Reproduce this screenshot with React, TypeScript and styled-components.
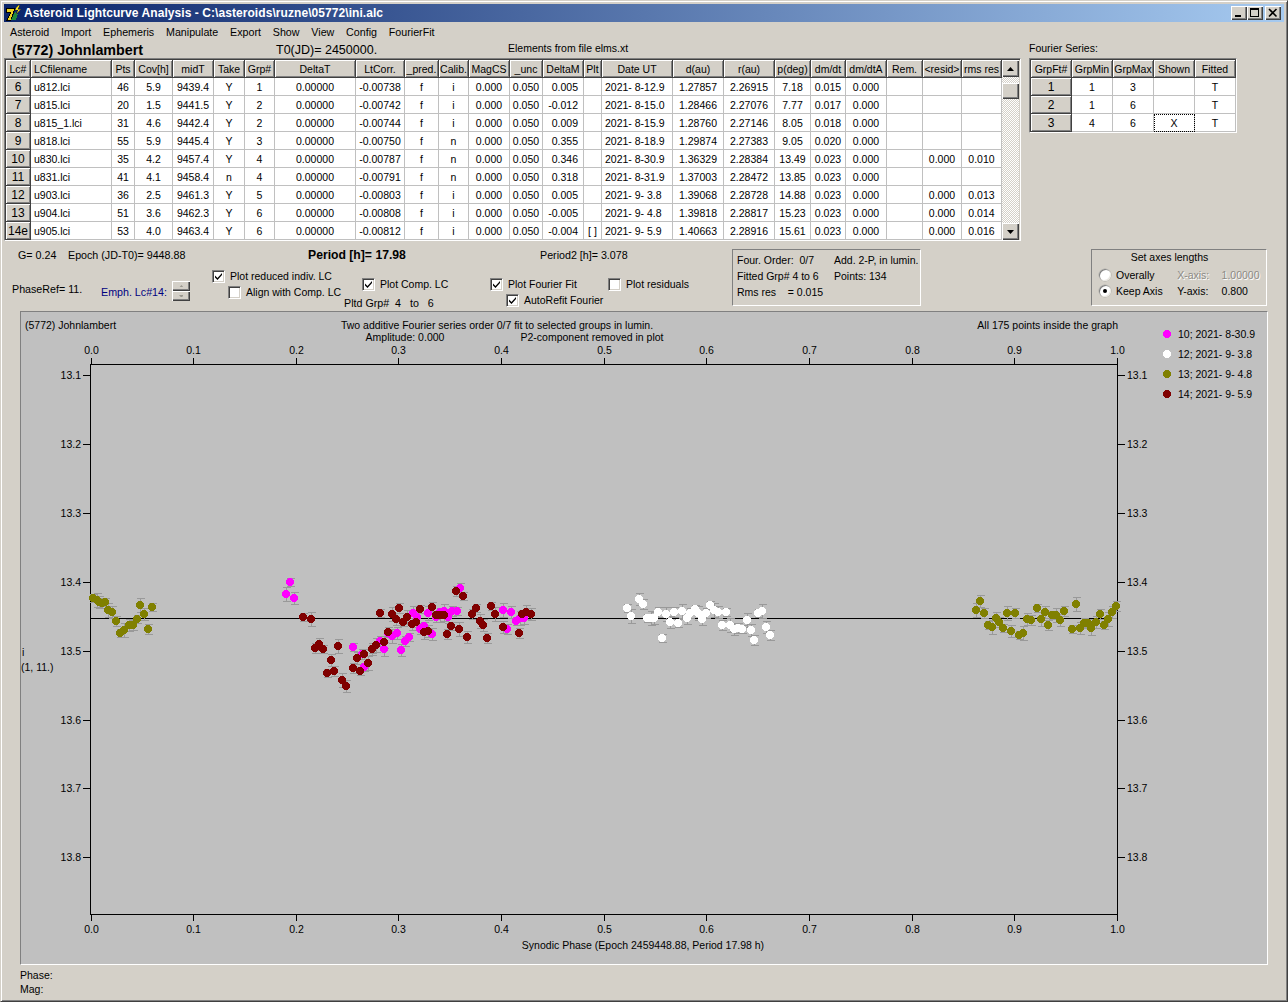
import React from "react";
import styled, { createGlobalStyle } from "styled-components";

const Global = createGlobalStyle`
  html, body { margin: 0; padding: 0; background: #d4d0c8; }
  body { font-family: "Liberation Sans", Arial, sans-serif; font-size: 11px; color: #000; }
  * { box-sizing: border-box; }
`;

const Win = styled.div`
  width: 1288px; height: 1002px; padding: 3px 2px 2px 3px;
  background: #d4d0c8; overflow: hidden;
  border: 1px solid; border-color: #d4d0c8 #404040 #404040 #d4d0c8;
  box-shadow: inset 1px 1px 0 #fff, inset -1px -1px 0 #808080;
`;
const Title = styled.div`
  height: 18px; width: 1280px; display: flex; align-items: center; padding: 0 3px 0 1px;
  background: linear-gradient(90deg, #0a246a, #a6caf0);
  color: #fff; font-weight: bold; font-size: 12px; letter-spacing: 0.065px;
`;
const TitleText = styled.span` margin-left: 2px; flex: 1; `;
const WinBtn = styled.button<{ $gap?: number }>`
  width: 16px; height: 14px; padding: 0; margin-left: ${p => p.$gap ?? 0}px;
  background: #d4d0c8; border: 0; display: flex; align-items: center; justify-content: center;
  box-shadow: inset 1px 1px 0 #fff, inset -1px -1px 0 #404040, inset -2px -2px 0 #808080;
`;
const Menu = styled.div`
  height: 18px; margin-top: 1px; display: flex; align-items: center; padding-left: 6px; gap: 11.8px; font-size: 10.7px;
`;
const TopRow = styled.div` display: flex; align-items: flex-start; `;
const TopLeft = styled.div` width: 1017px; `;
const NameRow = styled.div` height: 17px; display: flex; padding-left: 8px; `;
const AstName = styled.div` width: 264px; font-size: 14.3px; font-weight: bold; line-height: 18px; `;
const T0 = styled.div` width: 232px; font-size: 12.5px; line-height: 18px; `;
const Elements = styled.div` font-size: 10.5px; line-height: 14px; `;
const GridFrame = styled.div`
  display: flex; background: #d4d0c8;
  border: 1px solid; border-color: #808080 #fff #fff #808080;
  box-shadow: inset 1px 1px 0 #404040;
  padding: 1px 0 0 1px;
`;
const Grid = styled.table`
  table-layout: fixed; border-collapse: separate; border-spacing: 0; background: #fff; font-size: 10.5px;
`;
const Th = styled.th<{ $left?: boolean }>`
  height: 18px; padding: ${p => (p.$left ? "0 0 0 3px" : "0")}; font-weight: normal; background: #d4d0c8; white-space: nowrap; overflow: hidden;
  text-align: ${p => (p.$left ? "left" : "center")};
  border-right: 1px solid #404040; border-bottom: 1px solid #404040;
  box-shadow: inset 1px 1px 0 #fff, inset -1px -1px 0 #808080;
`;
const RowHead = styled(Th)` font-size: 12px; `;
const Td = styled.td<{ $align?: string; $focus?: boolean }>`
  height: 18px; padding: ${p => (p.$align === "left" ? "0 0 0 3px" : p.$align === "right" ? "0 5px 0 0" : "0")};
  text-align: ${p => p.$align ?? "center"}; white-space: nowrap; overflow: hidden;
  border-right: 1px solid #c0c0c0; border-bottom: 1px solid #c0c0c0;
  ${p => (p.$focus ? "outline: 1px dotted #000; outline-offset: -1px;" : "")}
`;
const Scroll = styled.div`
  width: 17px; height: 180px; display: flex; flex-direction: column; margin-right: 1px;
  background-color: #f0efec;
  background-image: conic-gradient(#d4d0c8 25%, #fff 0 50%, #d4d0c8 0 75%, #fff 0);
  background-size: 2px 2px;
`;
const ScrollBtn = styled.div`
  width: 17px; height: 17px; background: #d4d0c8; display: flex; align-items: center; justify-content: center;
  box-shadow: inset 1px 1px 0 #fff, inset -1px -1px 0 #404040, inset -2px -2px 0 #808080;
`;
const Thumb = styled(ScrollBtn)` margin-top: 6px; height: 16px; `;
const ScrollFill = styled.div` flex: 1; `;
const FourierCol = styled.div` margin-left: 8px; `;
const FourierLabel = styled.div` height: 17px; font-size: 10.5px; line-height: 14px; `;

const Strip = styled.div` display: flex; height: 70px; margin-top: 0; `;
const StripLeft = styled.div` width: 728px; `;
const InfoRow = styled.div` height: 27px; padding-top: 7px; display: flex; font-size: 10.7px; line-height: 14px; `;
const InfoCell = styled.div<{ $w: number; $bold?: boolean }>`
  width: ${p => p.$w}px; white-space: nowrap; flex: none;
  ${p => (p.$bold ? "font-weight: bold; font-size: 12.2px;" : "")}
`;
const CtrlRow = styled.div` display: flex; align-items: flex-start; `;
const PhaseBlock = styled.div` width: 208px; padding: 13px 0 0 8px; display: flex; align-items: center; font-size: 10.7px; `;
const PhaseRef = styled.div` width: 89px; margin-top: -4px; `;
const Emph = styled.div` width: 71px; color: #000080; margin-top: 1px; `;
const Spin = styled.div` width: 18px; height: 20px; display: flex; flex-direction: column; gap: 0; `;
const SpinBtn = styled.div`
  flex: 1; background: #d4d0c8; display: flex; align-items: center; justify-content: center;
  box-shadow: inset 1px 1px 0 #fff, inset -1px -1px 0 #404040, inset -2px -2px 0 #808080;
`;
const CtrlCol = styled.div<{ $w: number; $pt: number }>` width: ${p => p.$w}px; padding-top: ${p => p.$pt}px; flex: none; `;
const CheckLine = styled.label<{ $ind?: number; $mt?: number }>`
  display: flex; align-items: center; height: 14px; font-size: 10.5px; white-space: nowrap;
  margin-left: ${p => p.$ind ?? 0}px; margin-top: ${p => p.$mt ?? 0}px;
`;
const Box = styled.span`
  width: 13px; height: 13px; background: #fff; margin-right: 5px; flex: none; display: flex; align-items: center; justify-content: center;
  border: 1px solid; border-color: #808080 #fff #fff #808080; box-shadow: inset 1px 1px 0 #404040, inset -1px -1px 0 #d4d0c8;
`;
const PltdLine = styled.div` margin: 6px 0 0 1px; font-size: 10.7px; white-space: pre; `;
const GroupBox = styled.div<{ $w: number; $ml: number }>`
  width: ${p => p.$w}px; margin-left: ${p => p.$ml}px; height: 57px; margin-top: 8px; flex: none;
  border: 1px solid; border-color: #808080 #fff #fff #808080; font-size: 10.5px;
`;
const FourLine = styled.div` display: flex; height: 16px; padding-left: 4px; line-height: 16px; white-space: pre; `;
const FourFirst = styled.div` width: 97px; `;
const FourBody = styled.div` padding-top: 2px; `;
const AxesTitle = styled.div` text-align: center; height: 17px; line-height: 15px; padding: 0 19px 0 0; `;
const AxesLine = styled.div` display: flex; align-items: center; height: 16px; padding-left: 7px; `;
const Radio = styled.span`
  width: 12px; height: 12px; border-radius: 50%; background: #fff; flex: none; display: flex; align-items: center; justify-content: center;
  box-shadow: inset 1px 1px 0 #808080, inset -1px -1px 0 #e8e6e0, 0 0 0 0.5px #b0aea8;
`;
const Dot = styled.span` width: 4px; height: 4px; border-radius: 50%; background: #000; `;
const RadioText = styled.span` width: 62px; margin-left: 5px; `;
const AxisName = styled.span<{ $off?: boolean }>` width: 45px; color: ${p => (p.$off ? "#8c8a84" : "#000")}; ${p => (p.$off ? "text-shadow: 1px 1px 0 #fff;" : "")} `;

const PlotPanel = styled.div`
  width: 1248px; height: 654px; margin-left: 16px; background: #c0c0c0;
  border: 1px solid; border-color: #808080 #fff #fff #808080;
  svg { display: block; }
`;
const Lbl = styled.text<{ $a?: string; $c?: string }>`
  font-family: "Liberation Sans", Arial, sans-serif; font-size: 10.5px; fill: ${p => p.$c ?? "#000"};
  text-anchor: ${p => p.$a ?? "start"}; dominant-baseline: central;
`;
const Footer = styled.div` margin-left: 16px; margin-top: 3px; font-size: 10.5px; line-height: 14px; `;

const colW = [25, 81, 23, 38, 41, 31, 30, 81, 49, 34, 30, 41, 33, 41, 18, 71, 51, 51, 36, 35, 41, 36, 39, 40];
const heads = ["Lc#", "LCfilename", "Pts", "Cov[h]", "midT", "Take", "Grp#", "DeltaT", "LtCorr.", "_pred.", "Calib.", "MagCS", "_unc", "DeltaM", "Plt", "Date UT", "d(au)", "r(au)", "p(deg)", "dm/dt", "dm/dtA", "Rem.", "<resid>", "rms res"];
const rows: string[][] = [
  ["6", "u812.lci", "46", "5.9", "9439.4", "Y", "1", "0.00000", "-0.00738", "f", "i", "0.000", "0.050", "0.005", "", "2021- 8-12.9", "1.27857", "2.26915", "7.18", "0.015", "0.000", "", "", ""],
  ["7", "u815.lci", "20", "1.5", "9441.5", "Y", "2", "0.00000", "-0.00742", "f", "i", "0.000", "0.050", "-0.012", "", "2021- 8-15.0", "1.28466", "2.27076", "7.77", "0.017", "0.000", "", "", ""],
  ["8", "u815_1.lci", "31", "4.6", "9442.4", "Y", "2", "0.00000", "-0.00744", "f", "i", "0.000", "0.050", "0.009", "", "2021- 8-15.9", "1.28760", "2.27146", "8.05", "0.018", "0.000", "", "", ""],
  ["9", "u818.lci", "55", "5.9", "9445.4", "Y", "3", "0.00000", "-0.00750", "f", "n", "0.000", "0.050", "0.355", "", "2021- 8-18.9", "1.29874", "2.27383", "9.05", "0.020", "0.000", "", "", ""],
  ["10", "u830.lci", "35", "4.2", "9457.4", "Y", "4", "0.00000", "-0.00787", "f", "n", "0.000", "0.050", "0.346", "", "2021- 8-30.9", "1.36329", "2.28384", "13.49", "0.023", "0.000", "", "0.000", "0.010"],
  ["11", "u831.lci", "41", "4.1", "9458.4", "n", "4", "0.00000", "-0.00791", "f", "n", "0.000", "0.050", "0.318", "", "2021- 8-31.9", "1.37003", "2.28472", "13.85", "0.023", "0.000", "", "", ""],
  ["12", "u903.lci", "36", "2.5", "9461.3", "Y", "5", "0.00000", "-0.00803", "f", "i", "0.000", "0.050", "0.005", "", "2021- 9- 3.8", "1.39068", "2.28728", "14.88", "0.023", "0.000", "", "0.000", "0.013"],
  ["13", "u904.lci", "51", "3.6", "9462.3", "Y", "6", "0.00000", "-0.00808", "f", "i", "0.000", "0.050", "-0.005", "", "2021- 9- 4.8", "1.39818", "2.28817", "15.23", "0.023", "0.000", "", "0.000", "0.014"],
  ["14e", "u905.lci", "53", "4.0", "9463.4", "Y", "6", "0.00000", "-0.00812", "f", "i", "0.000", "0.050", "-0.004", "[ ]", "2021- 9- 5.9", "1.40663", "2.28916", "15.61", "0.023", "0.000", "", "0.000", "0.016"],
];
const alignOf = (i: number) => (i === 1 || i === 15 ? "left" : i === 13 ? "right" : "center");

const fHeads = ["GrpFt#", "GrpMin", "GrpMax", "Shown", "Fitted"];
const fRows = [["1", "1", "3", "", "T"], ["2", "1", "6", "", "T"], ["3", "4", "6", "X", "T"]];

type Pt = [number, number];
const conv = (ox: number, oy: number, a: number[][]): Pt[] => a.map(([x, y]) => [ox + x / 3, oy + y / 3]);
const magenta = conv(270, 570, [[61,37],[49,73],[73,85],[571,55],[250,232],[343,238],[394,241],[275,253],[283,290],[295,278],[307,238],[331,214],[355,190],[367,199],[382,189],[406,214],[418,202],[430,130],[442,142],[451,178],[463,169],[475,130],[487,193],[499,142],[511,127],[523,124],[535,142],[547,124],[562,124],[700,121],[724,127],[712,178],[739,154],[751,145],[763,145]]);
const white = conv(600, 580, [[82,85],[94,109],[118,58],[130,73],[142,115],[154,115],[163,115],[175,97],[187,175],[199,103],[211,127],[223,97],[235,130],[247,94],[262,115],[271,100],[286,88],[295,100],[307,118],[319,100],[331,76],[343,91],[355,97],[367,136],[379,97],[391,136],[403,148],[415,145],[427,148],[442,121],[454,151],[463,181],[475,100],[487,94],[499,142],[511,166]]);
const olive = [
  ...conv(60, 580, [[100,55],[112,61],[118,67],[127,70],[136,67],[145,91],[157,97],[169,124],[181,160],[193,151],[208,136],[220,136],[232,118],[241,76],[253,103],[265,148],[277,82]]),
  ...conv(950, 580, [[79,91],[91,64],[103,100],[115,136],[127,142],[139,115],[148,127],[160,145],[172,100],[184,154],[196,100],[208,166],[220,160],[232,118],[244,121],[262,85],[274,118],[286,97],[295,136],[307,106],[319,106],[331,121],[343,94],[367,148],[379,73],[391,145],[403,130],[415,130],[423,145],[439,127],[451,103],[463,136],[475,118],[487,97],[499,79]]),
];
const maroon = conv(270, 570, [[100,142],[124,148],[148,223],[136,235],[160,238],[205,229],[184,271],[193,304],[172,310],[217,331],[229,349],[250,295],[271,304],[295,280],[262,265],[283,253],[307,238],[319,226],[343,217],[355,187],[331,130],[367,133],[379,148],[388,115],[400,157],[412,142],[427,163],[439,157],[451,118],[463,187],[475,184],[487,112],[499,136],[511,136],[523,136],[532,193],[544,169],[568,178],[592,202],[607,133],[619,115],[630,154],[640,166],[652,205],[664,109],[676,133],[700,172],[748,190],[757,133],[769,127],[784,133],[557,64],[580,79]]);

const series: { c: string; pts: Pt[] }[] = [
  { c: "#ff00ff", pts: magenta },
  { c: "#ffffff", pts: white },
  { c: "#808000", pts: olive },
  { c: "#800000", pts: maroon },
];
const legend = [["#ff00ff", "10; 2021- 8-30.9"], ["#ffffff", "12; 2021- 9- 3.8"], ["#808000", "13; 2021- 9- 4.8"], ["#800000", "14; 2021- 9- 5.9"]];

const X0 = 90.5, XS = 1026.5;
const yTicks: [string, number][] = [["13.1", 375], ["13.2", 444], ["13.3", 513], ["13.4", 582], ["13.5", 651], ["13.6", 720], ["13.7", 788], ["13.8", 857]];
const xT = Array.from({ length: 11 }, (_, i) => ({ l: (i / 10).toFixed(1), x: Math.round(X0 + (XS * i) / 10) + 0.5 }));

// the reference's markers are aliased 8-pixel discs
const disc = (x: number, y: number) => {
  const l = Math.round(x) - 2, t = Math.round(y) - 4;
  return `M${l} ${t}h4v1h1v1h1v4h-1v1h-1v1h-4v-1h-1v-1h-1v-4h1v-1h1z`;
};

const Check = () => (
  <svg width="9" height="9" viewBox="0 0 9 9"><path d="M1 3.5 L3.5 6 L8 1 V3 L3.5 8 L1 5.5 Z" fill="#000" /></svg>
);
const CheckBox = ({ on }: { on?: boolean }) => <Box>{on ? <Check /> : null}</Box>;
const Tri = ({ up, c = "#000", s = 1 }: { up?: boolean; c?: string; s?: number }) => (
  <svg width={7 * s} height={4 * s} viewBox="0 0 7 4"><path d={up ? "M3.5 0 L7 4 H0 Z" : "M0 0 H7 L3.5 4 Z"} fill={c} /></svg>
);

const Logo = () => (
  <svg width="17" height="17" viewBox="0 0 17 17" shapeRendering="crispEdges">
    <path d="M1 3 H10 L6 15 H2 L6 7 H1 Z" fill="#e8d020" stroke="#000" strokeWidth="1" />
    <path d="M6 15 L10 7 L13 9 L11 15 Z" fill="#1f8a3c" />
    <path d="M13 0 L10 5 H13 L11 9 L16 4 H13 L15 0 Z" fill="#f4e020" stroke="#222" strokeWidth="0.5" />
  </svg>
);

export default function App() {
  return (
    <>
      <Global />
      <Win>
        <Title>
          <Logo />
          <TitleText>Asteroid Lightcurve Analysis - C:\asteroids\ruzne\05772\ini.alc</TitleText>
          <WinBtn aria-label="min"><svg width="10" height="10" viewBox="0 0 10 10"><rect x="1" y="7" width="6" height="2" /></svg></WinBtn>
          <WinBtn aria-label="max"><svg width="10" height="10" viewBox="0 0 10 10"><path d="M0 0 H9 V9 H0 Z M1 2 V8 H8 V2 Z" fillRule="evenodd" /></svg></WinBtn>
          <WinBtn $gap={2} aria-label="close"><svg width="10" height="10" viewBox="0 0 10 10"><path d="M1 1 L8.5 8.5 M8.5 1 L1 8.5" stroke="#000" strokeWidth="1.6" /></svg></WinBtn>
        </Title>
        <Menu>
          {["Asteroid", "Import", "Ephemeris", "Manipulate", "Export", "Show", "View", "Config", "FourierFit"].map(m => <span key={m}>{m}</span>)}
        </Menu>
        <TopRow>
          <TopLeft>
            <NameRow>
              <AstName>(5772) Johnlambert</AstName>
              <T0>T0(JD)= 2450000.</T0>
              <Elements>Elements from file elms.xt</Elements>
            </NameRow>
            <GridFrame>
              <Grid>
                <colgroup>{colW.map((w, i) => <col key={i} width={w} />)}</colgroup>
                <thead>
                  <tr>{heads.map((h, i) => <Th key={i} $left={i === 1}>{h}</Th>)}</tr>
                </thead>
                <tbody>
                  {rows.map(r => (
                    <tr key={r[0]}>
                      {r.map((c, i) => i === 0 ? <RowHead as="th" key={i}>{c}</RowHead> : <Td key={i} $align={alignOf(i)}>{c}</Td>)}
                    </tr>
                  ))}
                </tbody>
              </Grid>
              <Scroll>
                <ScrollBtn><Tri up /></ScrollBtn>
                <Thumb />
                <ScrollFill />
                <ScrollBtn><Tri /></ScrollBtn>
              </Scroll>
            </GridFrame>
          </TopLeft>
          <FourierCol>
            <FourierLabel>Fourier Series:</FourierLabel>
            <GridFrame>
              <Grid>
                <colgroup>{[41, 41, 41, 41, 41].map((w, i) => <col key={i} width={w} />)}</colgroup>
                <thead><tr>{fHeads.map(h => <Th key={h}>{h}</Th>)}</tr></thead>
                <tbody>
                  {fRows.map(r => (
                    <tr key={r[0]}>
                      {r.map((c, i) => i === 0 ? <RowHead as="th" key={i}>{c}</RowHead> : <Td key={i} $focus={c === "X"}>{c}</Td>)}
                    </tr>
                  ))}
                </tbody>
              </Grid>
            </GridFrame>
          </FourierCol>
        </TopRow>
        <Strip>
          <StripLeft>
            <InfoRow>
              <InfoCell $w={14} />
              <InfoCell $w={50}>G= 0.24</InfoCell>
              <InfoCell $w={240}>Epoch (JD-T0)= 9448.88</InfoCell>
              <InfoCell $w={232} $bold>Period [h]= 17.98</InfoCell>
              <InfoCell $w={110}>Period2 [h]= 3.078</InfoCell>
            </InfoRow>
            <CtrlRow>
              <PhaseBlock>
                <PhaseRef>PhaseRef= 11.</PhaseRef>
                <Emph>Emph. Lc#14:</Emph>
                <Spin>
                  <SpinBtn><Tri up c="#9a9890" s={0.7} /></SpinBtn>
                  <SpinBtn><Tri c="#9a9890" s={0.7} /></SpinBtn>
                </Spin>
              </PhaseBlock>
              <CtrlCol $w={131} $pt={1}>
                <CheckLine><CheckBox on />Plot reduced indiv. LC</CheckLine>
                <CheckLine $ind={16} $mt={2}><CheckBox />Align with Comp. LC</CheckLine>
              </CtrlCol>
              <CtrlCol $w={147} $pt={9}>
                <CheckLine $ind={19}><CheckBox on />Plot Comp. LC</CheckLine>
                <PltdLine>Pltd Grp#  4   to   6</PltdLine>
              </CtrlCol>
              <CtrlCol $w={118} $pt={9}>
                <CheckLine><CheckBox on />Plot Fourier Fit</CheckLine>
                <CheckLine $ind={16} $mt={2}><CheckBox on />AutoRefit Fourier</CheckLine>
              </CtrlCol>
              <CtrlCol $w={100} $pt={9}>
                <CheckLine><CheckBox />Plot residuals</CheckLine>
              </CtrlCol>
            </CtrlRow>
          </StripLeft>
          <GroupBox $w={189} $ml={0}>
            <FourBody>
              <FourLine><FourFirst>Four. Order:  0/7</FourFirst>Add. 2-P, in lumin.</FourLine>
              <FourLine><FourFirst>Fitted Grp# 4 to 6</FourFirst>Points: 134</FourLine>
              <FourLine>Rms res    = 0.015</FourLine>
            </FourBody>
          </GroupBox>
          <GroupBox $w={176} $ml={170}>
            <AxesTitle>Set axes lengths</AxesTitle>
            <AxesLine><Radio /><RadioText>Overally</RadioText><AxisName $off>X-axis:</AxisName><AxisName $off>1.00000</AxisName></AxesLine>
            <AxesLine><Radio><Dot /></Radio><RadioText>Keep Axis</RadioText><AxisName>Y-axis:</AxisName><AxisName>0.800</AxisName></AxesLine>
          </GroupBox>
        </Strip>
        <PlotPanel>
          <svg width="1246" height="652" viewBox="21 312 1246 652">
            <Lbl x="25" y="325">(5772) Johnlambert</Lbl>
            <Lbl x="497" y="325" $a="middle">Two additive Fourier series order 0/7 fit to selected groups in lumin.</Lbl>
            <Lbl x="405" y="337" $a="middle">Amplitude: 0.000</Lbl>
            <Lbl x="592" y="337" $a="middle">P2-component removed in plot</Lbl>
            <Lbl x="1118" y="325" $a="end">All 175 points inside the graph</Lbl>
            <Lbl x="22" y="652">i</Lbl>
            <Lbl x="21" y="667">(1, 11.)</Lbl>
            <Lbl x="643" y="945" $a="middle">Synodic Phase (Epoch 2459448.88, Period 17.98 h)</Lbl>
            <g shapeRendering="crispEdges" stroke="#000" fill="none">
              <rect x="90.5" y="364.5" width="1027" height="550" />
              <line x1="90" x2="1118" y1="618.5" y2="618.5" />
              {xT.map(t => (
                <g key={t.l}>
                  <line x1={t.x} x2={t.x} y1="358" y2="364" />
                  <line x1={t.x} x2={t.x} y1="915" y2="921" />
                </g>
              ))}
              {yTicks.map(([l, y]) => (
                <g key={l}>
                  <line x1="83" x2="90" y1={y + 0.5} y2={y + 0.5} />
                  <line x1="1118" x2="1125" y1={y + 0.5} y2={y + 0.5} />
                </g>
              ))}
            </g>
            {xT.map(t => (
              <g key={t.l}>
                <Lbl x={t.x} y="350" $a="middle">{t.l}</Lbl>
                <Lbl x={t.x} y="929" $a="middle">{t.l}</Lbl>
              </g>
            ))}
            {yTicks.map(([l, y]) => (
              <g key={l}>
                <Lbl x="81" y={y} $a="end">{l}</Lbl>
                <Lbl x="1127" y={y}>{l}</Lbl>
              </g>
            ))}
            <g shapeRendering="crispEdges" stroke="#999" fill="none">
              {series.map(s => s.pts.map(([x, y], i) => {
                const e = 4 + ((i * 7) % 4);
                const px = Math.round(x) + 0.5;
                return (
                  <path key={s.c + i} d={`M${px} ${Math.round(y - e)}.5 V${Math.round(y + e)}.5 M${px - 4} ${Math.round(y - e)}.5 H${px + 4} M${px - 4} ${Math.round(y + e)}.5 H${px + 4}`} />
                );
              }))}
            </g>
            <g shapeRendering="crispEdges">
              {series.map(s => s.pts.map(([x, y], i) => (
                <path key={s.c + i} d={disc(x, y)} fill={s.c} />
              )))}
              {legend.map(([c], i) => <path key={c} d={disc(1167, 334 + i * 20)} fill={c} />)}
            </g>
            {legend.map(([c, t], i) => <Lbl key={c} x="1178" y={334 + i * 20}>{t}</Lbl>)}
          </svg>
        </PlotPanel>
        <Footer>
          <div>Phase:</div>
          <div>Mag:</div>
        </Footer>
      </Win>
    </>
  );
}
